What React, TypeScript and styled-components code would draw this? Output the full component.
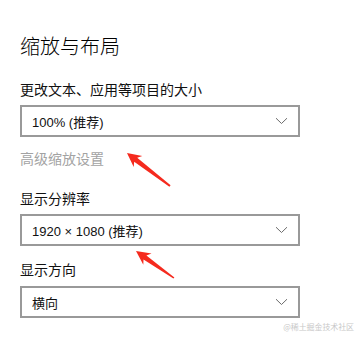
import React from "react";
import styled, { createGlobalStyle } from "styled-components";

const Global = createGlobalStyle`
  html, body { margin: 0; padding: 0; background: #ffffff; }
  body { font-family: "Noto Sans CJK SC", "Noto Sans", sans-serif; color: #000; }
`;

const Page = styled.div`
  position: relative;
  width: 364px;
  height: 340px;
  box-sizing: border-box;
  padding: 32px 0 0 20px;
  overflow: hidden;
  display: flex;
  flex-direction: column;
  align-items: flex-start;
`;

const Title = styled.h1`
  margin: 0;
  font-size: 20px;
  line-height: 28px;
  font-weight: 300;
  color: #000;
`;

const Label = styled.div<{ $top: number; $muted?: boolean }>`
  margin-top: ${(p) => p.$top}px;
  font-size: 14px;
  line-height: 20px;
  color: ${(p) => (p.$muted ? "#a3a3a3" : "#111")};
`;

const Select = styled.div<{ $top: number }>`
  margin-top: ${(p) => p.$top}px;
  width: 280px;
  height: 32px;
  box-sizing: border-box;
  border: 2px solid #999999;
  padding: 0 10px 0 10px;
  display: flex;
  align-items: center;
  justify-content: space-between;
  font-family: "Liberation Sans", "Noto Sans CJK SC", sans-serif;
  font-size: 13px;
  color: #111;
`;

const Chevron = styled.svg`
  width: 13px;
  height: 8px;
  display: block;
`;

const Overlay = styled.svg`
  position: absolute;
  left: 0;
  top: 0;
  width: 364px;
  height: 340px;
  pointer-events: none;
`;

const Watermark = styled.div`
  position: absolute;
  right: 10px;
  bottom: 8px;
  font-size: 8px;
  line-height: 10px;
  color: #c8c8c8;
  letter-spacing: -0.1px;
`;

const Caret = () => (
  <Chevron viewBox="0 0 13 8">
    <path d="M1 1.2 L6.5 6.5 L12 1.2" fill="none" stroke="#6b6b6b" strokeWidth="1" />
  </Chevron>
);

type DropProps = { top: number; value: string };
const Dropdown = ({ top, value }: DropProps) => (
  <Select $top={top}>
    <span>{value}</span>
    <Caret />
  </Select>
);

export default function App() {
  return (
    <>
      <Global />
      <Page>
        <Title>缩放与布局</Title>
        <Label $top={19}>更改文本、应用等项目的大小</Label>
        <Dropdown top={6} value="100% (推荐)" />
        <Label $top={11} $muted>
          高级缩放设置
        </Label>
        <Label $top={20}>显示分辨率</Label>
        <Dropdown top={6} value="1920 × 1080 (推荐)" />
        <Label $top={13}>显示方向</Label>
        <Dropdown top={7} value="横向" />
        <Overlay viewBox="0 0 364 340">
          <polygon
            points="127,153 142.3,156 137.2,157.7 170.6,185.3 169.4,186.7 134.2,161.7 133.7,167"
            fill="#f52a1e"
          />
          <polygon
            points="136,251 151.5,253.4 146.4,255.4 174.4,277.4 173.4,278.6 143.5,259.4 143.3,264.8"
            fill="#f52a1e"
          />
        </Overlay>
        <Watermark>@稀土掘金技术社区</Watermark>
      </Page>
    </>
  );
}
